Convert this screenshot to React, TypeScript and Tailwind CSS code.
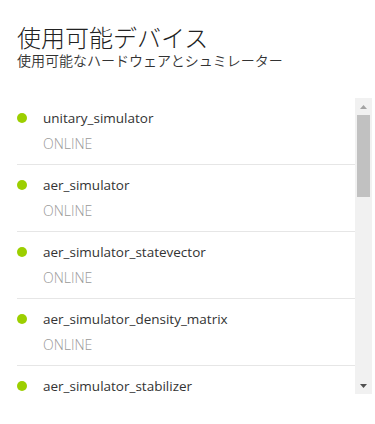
const devices = [
  'unitary_simulator',
  'aer_simulator',
  'aer_simulator_statevector',
  'aer_simulator_density_matrix',
  'aer_simulator_stabilizer',
];

export default function App() {
  return (
    <div
      className="h-[424px] w-[375px] bg-white pl-[17px] pr-[3px] pt-[23px]"
      style={{ fontFamily: '"Open Sans", "Noto Sans CJK JP", sans-serif' }}
    >
      {/* Header */}
      <h1 className="text-[24px] font-light leading-[28px] text-[#222]" style={{ fontFamily: '"Noto Sans CJK JP", sans-serif' }}>
        使用可能デバイス
      </h1>
      <p className="text-[14px] font-[350] leading-[18px] text-[#333]" style={{ fontFamily: '"Noto Sans CJK JP", sans-serif' }}>
        使用可能なハードウェアとシュミレーター
      </p>

      {/* Device list */}
      <div className="mt-[29px] flex h-[296px]">
        <div className="flex-1 overflow-hidden">
          {devices.map((name) => (
            <div key={name} className="border-b border-[#e6e6e6] pb-[11px] pt-[11px]">
              <div className="flex items-center">
                <span className="h-[10px] w-[10px] rounded-full bg-[#9ccf00]" />
                <span className="ml-[16px] text-[13.5px] leading-[18px] text-[#333]">{name}</span>
              </div>
              <div className="ml-[26px] mt-[8px] text-[14px] font-light leading-[18px] text-[#999]">
                ONLINE
              </div>
            </div>
          ))}
        </div>

        {/* Scrollbar */}
        <div className="flex w-[17px] flex-col items-center bg-[#f1f1f1]">
          <div className="flex h-[17px] items-center justify-center">
            <svg width="7" height="4" viewBox="0 0 7 4">
              <path d="M0 4 L3.5 0 L7 4 Z" fill="#a3a3a3" />
            </svg>
          </div>
          <div className="h-[82px] w-[13px] bg-[#c1c1c1]" />
          <div className="flex-1" />
          <div className="flex h-[17px] items-center justify-center">
            <svg width="7" height="4" viewBox="0 0 7 4">
              <path d="M0 0 L7 0 L3.5 4 Z" fill="#505050" />
            </svg>
          </div>
        </div>
      </div>
    </div>
  );
}
